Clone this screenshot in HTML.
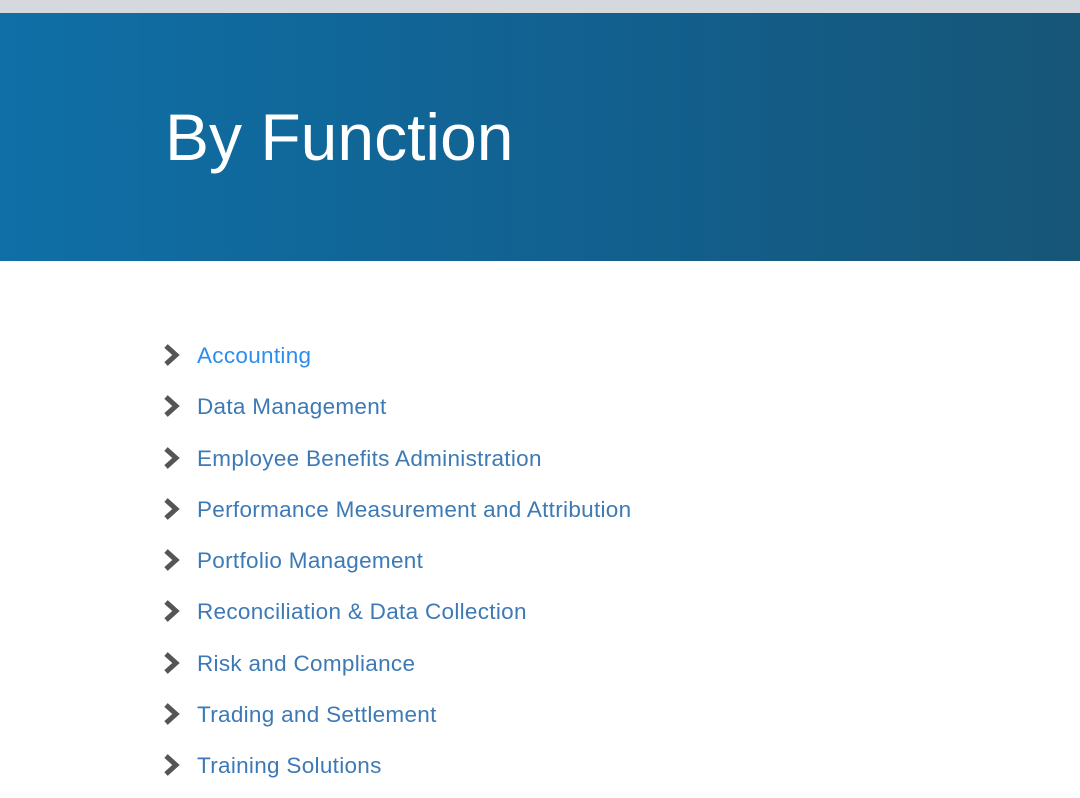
<!DOCTYPE html>
<html><head><meta charset="utf-8"><style>
html,body{margin:0;padding:0;width:1080px;height:798px;overflow:hidden;background:#fff;font-family:"Liberation Sans",sans-serif}
.top{height:13px;background:#d5d9dd}
.hero{height:248px;background:linear-gradient(90deg,#0f6fa6 0%,#125f8d 60%,#175677 100%);position:relative}
.hero h1{position:absolute;left:165px;top:84px;margin:0;font-weight:400;font-size:66px;color:#fff;line-height:80px;letter-spacing:0px}
ul{list-style:none;margin:0;padding:0;position:absolute;left:162px;top:330px}
li{height:51.3px;position:relative;font-size:22.5px;letter-spacing:0.3px;color:#3d7ab5;line-height:51px}
li span{position:absolute;left:35px;top:0;white-space:nowrap}
li svg{position:absolute;left:0;top:13px}
li.a span{color:#2c8df0}
</style></head><body>
<div class="top"></div>
<div class="hero"><h1>By Function</h1></div>
<ul>
<li class="a"><svg width="20" height="24" viewBox="0 0 20 24"><path d="M4 3 L14 12 L4 21" fill="none" stroke="#555" stroke-width="5"/></svg><span>Accounting</span></li>
<li><svg width="20" height="24" viewBox="0 0 20 24"><path d="M4 3 L14 12 L4 21" fill="none" stroke="#555" stroke-width="5"/></svg><span>Data Management</span></li>
<li><svg width="20" height="24" viewBox="0 0 20 24"><path d="M4 3 L14 12 L4 21" fill="none" stroke="#555" stroke-width="5"/></svg><span>Employee Benefits Administration</span></li>
<li><svg width="20" height="24" viewBox="0 0 20 24"><path d="M4 3 L14 12 L4 21" fill="none" stroke="#555" stroke-width="5"/></svg><span>Performance Measurement and Attribution</span></li>
<li><svg width="20" height="24" viewBox="0 0 20 24"><path d="M4 3 L14 12 L4 21" fill="none" stroke="#555" stroke-width="5"/></svg><span>Portfolio Management</span></li>
<li><svg width="20" height="24" viewBox="0 0 20 24"><path d="M4 3 L14 12 L4 21" fill="none" stroke="#555" stroke-width="5"/></svg><span>Reconciliation &amp; Data Collection</span></li>
<li><svg width="20" height="24" viewBox="0 0 20 24"><path d="M4 3 L14 12 L4 21" fill="none" stroke="#555" stroke-width="5"/></svg><span>Risk and Compliance</span></li>
<li><svg width="20" height="24" viewBox="0 0 20 24"><path d="M4 3 L14 12 L4 21" fill="none" stroke="#555" stroke-width="5"/></svg><span>Trading and Settlement</span></li>
<li><svg width="20" height="24" viewBox="0 0 20 24"><path d="M4 3 L14 12 L4 21" fill="none" stroke="#555" stroke-width="5"/></svg><span>Training Solutions</span></li>
</ul>
</body></html>
